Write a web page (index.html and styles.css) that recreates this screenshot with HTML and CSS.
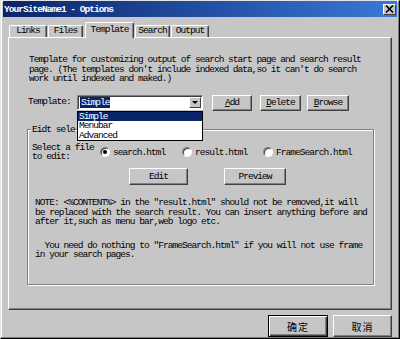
FILE: index.html
```html
<!DOCTYPE html>
<html lang="en">
<head>
    <meta charset="UTF-8" />
    <title>YourSiteName1 - Options</title>
    <link rel="stylesheet" href="styles.css">
</head>
<body>
    <div class="window">
        <div class="titlebar">
            <span class="title">YourSiteName1 - Options</span>
            <span class="close">
                <svg width="9" height="8" viewBox="0 0 9 8"><path d="M1 0.5 L8 7.5 M8 0.5 L1 7.5" stroke="#000" stroke-width="1.6" /></svg>
            </span>
        </div>

        <div class="tabs">
            <div class="tab t-links">Links</div>
            <div class="tab t-files">Files</div>
            <div class="tab t-template active">Template</div>
            <div class="tab t-search">Search</div>
            <div class="tab t-output">Output</div>
        </div>

        <div class="panel">
            <p class="intro">Template for customizing output of search start page and search result
page. (The templates don't include indexed data,so it can't do search
work until indexed and maked.)</p>

            <div class="tpl-row">
                <span class="tpl-label">Template:</span>
                <div class="combo">
                    <span class="combo-value"><span class="sel">Simple</span></span>
                    <span class="combo-arrow"></span>
                    <ul class="combo-list">
                        <li class="on">Simple</li>
                        <li>Menubar</li>
                        <li>Advanced</li>
                    </ul>
                </div>
                <button class="btn b-add"><u>A</u>dd</button>
                <button class="btn b-delete"><u>D</u>elete</button>
                <button class="btn b-browse"><u>B</u>rowse</button>
            </div>

            <div class="group">
                <span class="legend">Eidt sele</span>
                <div class="file-row">
                    <span class="file-label">Select a file
to edit:</span>
                    <label class="radio"><span class="circle on"></span>search.html</label>
                    <label class="radio"><span class="circle"></span>result.html</label>
                    <label class="radio r-last"><span class="circle"></span>FrameSearch.html</label>
                </div>
                <div class="edit-row">
                    <button class="btn b-edit">Edit</button>
                    <button class="btn b-preview">Preview</button>
                </div>
                <p class="note">NOTE: &lt;%CONTENT%&gt; in the "result.html" should not be removed,it will
be replaced with the search result. You can insert anything before and
after it,such as menu bar,web logo etc.</p>
                <p class="note note2">  You need do nothing to "FrameSearch.html" if you will not use frame
in your search pages.</p>
            </div>
        </div>

        <div class="footer">
            <button class="btn cn default">确定</button>
            <button class="btn cn">取消</button>
        </div>
    </div>
</body>
</html>
```

FILE: styles.css
```css
body {
    margin: 0;
    font-family: "Liberation Mono", "Noto Sans CJK SC", monospace;
    font-size: 9.5px;
    letter-spacing: -0.96px;
    color: #000;
}
.window {
    width: 400px;
    height: 339px;
    box-sizing: border-box;
    background: #c6c6c6;
    border: 1px solid;
    border-color: #e4e4e4 #000 #000 #e4e4e4;
    box-shadow: inset -1px -1px #808080, inset 1px 1px #fff;
    padding: 0 2px;
}
.titlebar {
    height: 16px;
    display: flex;
    align-items: center;
    background: linear-gradient(to right, #0a246a, #3a78d8);
    padding-left: 1px;
}
.title {
    color: #fff;
    font-weight: bold;
}
.close {
    margin-left: auto;
    margin-right: 1px;
    width: 13px;
    height: 11px;
    box-sizing: border-box;
    background: #c6c6c6;
    border: 1px solid;
    border-color: #fff #404040 #404040 #fff;
    display: flex;
    align-items: center;
    justify-content: center;
}
.tabs {
    display: flex;
    align-items: flex-end;
    height: 15px;
    margin: 5px 0 0 6px;
}
.tab {
    height: 12px;
    box-sizing: border-box;
    border: 1px solid;
    border-bottom: none;
    border-color: #fff #404040 #fff #fff;
    border-radius: 2px 2px 0 0;
    box-shadow: inset -1px 0 #808080;
    text-align: center;
    line-height: 10px;
    margin-right: 1px;
}
.t-links { width: 38px; }
.t-files { width: 35px; }
.t-template { width: 49px; }
.t-search { width: 35px; }
.t-output { width: 38px; }
.tab.active {
    height: 16px;
    margin-bottom: -1px;
    margin-left: 1px;
    line-height: 13px;
    background: #c6c6c6;
    position: relative;
    z-index: 1;
}
.panel {
    width: 384px;
    height: 273px;
    box-sizing: border-box;
    margin-left: 5px;
    border: 1px solid;
    border-color: #fff #404040 #404040 #fff;
    box-shadow: inset -1px -1px #808080;
    padding: 17px 0 0 18px;
}
p {
    margin: 0;
    white-space: pre;
    line-height: 9.6px;
}
.intro {
    margin-left: 2px;
}
.tpl-row {
    display: flex;
    align-items: flex-start;
    margin-top: 11px;
    height: 16px;
}
.tpl-label {
    width: 50px;
    padding-left: 1px;
    box-sizing: border-box;
    line-height: 14px;
}
.combo {
    position: relative;
    width: 126px;
    height: 15px;
    box-sizing: border-box;
    border: 1px solid;
    border-color: #808080 #fff #fff #808080;
    box-shadow: inset 1px 1px #404040;
    background: #fff;
    display: flex;
    padding: 2px 1px 1px 2px;
}
.combo-value {
    flex: 1;
    line-height: 10px;
}
.sel {
    background: #0a246a;
    color: #fff;
    padding: 0 1px;
}
.combo-arrow {
    width: 12px;
    height: 11px;
    margin-top: -1px;
    box-sizing: border-box;
    background: #c6c6c6;
    border: 1px solid;
    border-color: #fff #404040 #404040 #fff;
    position: relative;
}
.combo-arrow::after {
    content: "";
    position: absolute;
    left: 2px;
    top: 3px;
    border-left: 3px solid transparent;
    border-right: 3px solid transparent;
    border-top: 3px solid #000;
}
.combo-list {
    position: absolute;
    left: -1px;
    top: 15px;
    width: 126px;
    box-sizing: border-box;
    margin: 0;
    padding: 0;
    list-style: none;
    background: #fff;
    border: 1px solid #000;
    z-index: 2;
}
.combo-list li {
    line-height: 9.4px;
    padding-left: 1px;
}
.combo-list li.on {
    background: #0a246a;
    color: #fff;
}
.btn {
    font: inherit;
    letter-spacing: inherit;
    color: #000;
    background: #c6c6c6;
    border: 1px solid;
    border-color: #fff #404040 #404040 #fff;
    box-shadow: inset -1px -1px #808080;
    padding: 0;
    height: 16px;
    box-sizing: border-box;
}
.b-add { margin-left: 9px; width: 40px; }
.b-delete { margin-left: 8px; width: 41px; }
.b-browse { margin-left: 6px; width: 42px; }
.group {
    position: relative;
    margin-top: 18px;
    width: 347px;
    height: 156px;
    box-sizing: border-box;
    border: 1px solid #808080;
    box-shadow: inset 1px 1px #fff, 1px 1px #fff;
    padding: 13px 0 0 4px;
}
.legend {
    position: absolute;
    top: -5px;
    left: 3px;
    white-space: nowrap;
    line-height: 10px;
    background: #c6c6c6;
    padding-left: 1px;
}
.file-row {
    display: flex;
    align-items: center;
}
.file-label {
    width: 68px;
    white-space: pre;
    line-height: 9.6px;
}
.radio {
    width: 82px;
    display: flex;
    align-items: center;
}
.radio + .radio {
    width: 81px;
}
.radio.r-last {
    width: auto;
}
.circle {
    flex-shrink: 0;
    width: 10px;
    height: 10px;
    box-sizing: border-box;
    border-radius: 50%;
    background: #fff;
    border: 1px solid;
    border-color: #808080 #fff #fff #808080;
    box-shadow: inset 1px 1px #404040;
    margin-right: 3px;
    display: flex;
    align-items: center;
    justify-content: center;
}
.circle.on::after {
    content: "";
    width: 4px;
    height: 4px;
    border-radius: 50%;
    background: #000;
}
.edit-row {
    display: flex;
    margin-top: 6px;
}
.b-edit { margin-left: 97px; width: 59px; height: 17px; }
.b-preview { margin-left: 36px; width: 62px; height: 17px; }
.note {
    margin: 13px 0 0 3px;
}
.note2 {
    margin-top: 14px;
}
.footer {
    display: flex;
    justify-content: flex-end;
    margin: 5px 5px 0 0;
}
.btn.cn {
    font-family: "Noto Sans CJK SC", sans-serif;
    font-size: 10px;
    letter-spacing: 1px;
    width: 59px;
    height: 22px;
    margin-left: 5px;
}
.btn.default {
    width: 60px;
    border: 1px solid #000;
    box-shadow: inset 1px 1px #fff, inset -1px -1px #404040, inset -2px -2px #808080;
}
```
